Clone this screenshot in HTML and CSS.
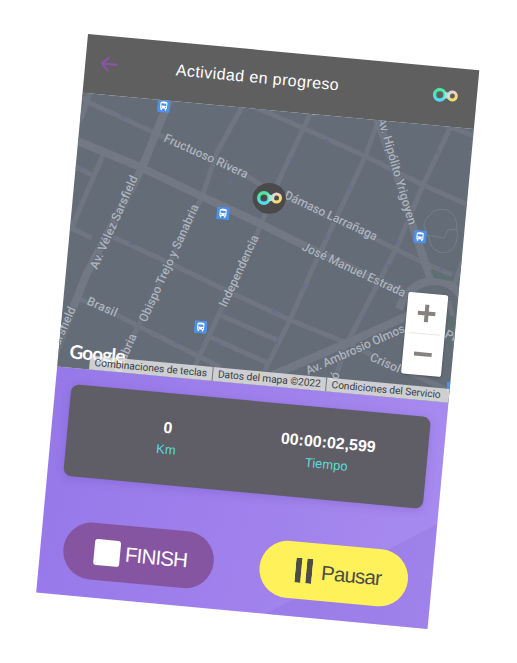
FILE: index.html
```
<!DOCTYPE html>
<html lang="es">
<head>
<meta charset="utf-8">
<title>Actividad en progreso</title>
<link rel="stylesheet" href="styles.css">
</head>
<body>
<svg class="defs" width="0" height="0" aria-hidden="true">
  <defs>
    <linearGradient id="mint" x1="0.3" y1="0" x2="0.5" y2="1">
      <stop offset="0" stop-color="#4be69a"/><stop offset="1" stop-color="#4fdcf0"/>
    </linearGradient>
    <linearGradient id="sun" x1="0" y1="0" x2="0.4" y2="1">
      <stop offset="0.2" stop-color="#f0cfd2"/><stop offset="1" stop-color="#fbdc62"/>
    </linearGradient>
    <symbol id="loop" viewBox="-13 -8 26 16">
      <circle cx="-5.6" cy="0" r="5.2" fill="none" stroke="url(#mint)" stroke-width="3.4"/>
      <circle cx="7" cy="0" r="4" fill="none" stroke="url(#sun)" stroke-width="3"/>
      <path d="M-3 -5Q1.200 -1.200 5 -4.200L3.800 0L5 4.200Q1.200 1.200 -3 5Q0 2.600 -.6 0Q0 -2.600 -3 -5Z" fill="#a9e3d2"/>
      <path d="M1.500 1L5.400 -4L4 3.200Z" fill="#dcdcd4"/>
    </symbol>
    <symbol id="bus" viewBox="0 0 13 13">
      <rect width="13" height="13" rx="1.5" fill="#4c90ea"/>
      <path d="M3 3.2Q3 2 6.5 2T10 3.2V9.2H9.3V10.8H8V9.2H5V10.8H3.7V9.2H3Z" fill="#fff"/>
      <path d="M4 4H9V6.3H4Z" fill="#4c90ea"/>
      <circle cx="4.5" cy="7.8" r=".6" fill="#4c90ea"/><circle cx="8.5" cy="7.8" r=".6" fill="#4c90ea"/>
    </symbol>
  </defs>
</svg>
<main class="phone">
  <header class="bar">
    <svg class="back" viewBox="0 0 18 16"><path d="M17 8H1.5M8.5 1L1.5 8L8.5 15" fill="none" stroke="#8656a3" stroke-width="2.1"/></svg>
    <h1 class="title">Actividad en progreso</h1>
    <svg class="logo"><use href="#loop"/></svg>
  </header>
  <section class="map">
    <svg class="canvas" viewBox="0 0 393 275">
      <g transform="translate(0 -59) rotate(-5.3) translate(-88 -34)">
        <g class="roads">
          <path d="M76 93L90 103L153 132L250 178L269 190L379 241L420 261L452 275"/>
          <path d="M91 90L80 122M103 155L72 227M70 164L94 176M62 224L92 238"/>
          <path d="M113 237L163 260L240 297L290 320L347 343L407 372L460 395"/>
          <path d="M246 100L217 152L202 197L138 327L115 370"/>
          <path d="M312 110L280 178L260 227L220 312L193 370"/>
          <path d="M380 116L365 157L312 270L290 320L265 370"/>
          <path d="M453 122L423 185L397 247L347 343L333 385"/>
          <path d="M250 105L303 128L367 157L423 185L475 208M450 127L480 138"/>
          <path d="M77 298L117 315L140 327L220 367M220 315L277 340M210 337L270 364"/>
          <path d="M475 225L466 252L454 285M448 300Q460 335 452 390"/>
        </g>
        <g class="roads avenues">
          <path d="M68 137L140 167L203 197L257 222L303 245L410 296"/>
          <path d="M170 98L142 168L87 273L75 303L50 365"/>
          <path d="M376 115L392 160L414 230L431 280"/>
          <path d="M273 375L347 343L403 318L436 302"/>
          <path d="M399 309Q409 282 434 281Q453 281 462 298"/>
        </g>
        <path class="park" d="M430 270L453 278L451 281L434 278ZM449 315L456 318L450 350L446 342Z"/>
        <path class="stadium" d="M429 216Q436 207 447 210Q457 214 457 229Q459 245 450 251Q440 256 432 247Q430 240 425 229Q422 222 429 216ZM426 235L444 238L448 230L457 229"/>
        <path d="M312.500 114L314.500 114.500" stroke="#d5d8de" stroke-width="1.500"/>
        <g class="transit"><path d="M121 116l4 2M231 180l-2 4M325 139l4 2M78 168l4 1M129 243l4 2M292 158l-2 4M351 185l-2 5M327 235l-2 5M305 284l-2 5M439 150l-2 4M399 240l-2 4M389 264l-2 4M365 313l-2 4M272 311l4 2M278 340l-2 4M174 342l4 2M203 345l-1 3M216 342l4 2M439 269l4 1"/></g>
        <g class="names">
          <text transform="translate(163 141) rotate(24.3)" textLength="91">Fructuoso Rivera</text>
          <text transform="translate(283.500 198) rotate(25)" textLength="101">Dámaso Larrañaga</text>
          <text transform="translate(301 249.500) rotate(25)" textLength="113">José Manuel Estrada</text>
          <text transform="translate(377.500 119) rotate(73.600)" textLength="111">Av. Hipólito Yrigoyen</text>
          <text transform="translate(97 270) rotate(-66)" textLength="101">Av. Vélez Sarsfield</text>
          <text transform="translate(146 323) rotate(-65.500)" textLength="128">Obispo Trejo y Sanabria</text>
          <text transform="translate(226 308) rotate(-65)" textLength="78">Independencia</text>
          <text transform="translate(86 304) rotate(24)" textLength="32">Brasil</text>
          <text transform="translate(76 309) rotate(-66)" text-anchor="end">Sarsfield</text>
          <text transform="translate(137 336) rotate(-66)" text-anchor="end">Sanabria</text>
          <text transform="translate(308 375) rotate(-24)" textLength="107">Av. Ambrosio Olmos</text>
          <text transform="translate(369 360) rotate(24)" textLength="32">Crisol</text>
          <text transform="translate(444 337) rotate(25)">Pl</text>
          <text transform="translate(340 374) rotate(-66)" text-anchor="end">ló</text>
        </g>
        <use href="#bus" width="13" height="13" transform="translate(163.7 106) rotate(5.3) translate(-6.5 -6.5)"/>
        <use href="#bus" width="13" height="13" transform="translate(223 213.3) rotate(5.3) translate(-6.5 -6.5)"/>
        <use href="#bus" width="13" height="13" transform="translate(420 236.7) rotate(5.3) translate(-6.5 -6.5)"/>
        <use href="#bus" width="13" height="13" transform="translate(200.7 327) rotate(5.3) translate(-6.5 -6.5)"/>
        <rect x="447" y="382" width="8" height="10" fill="#4c90ea"/>
        <ellipse cx="269.3" cy="198.3" rx="16.6" ry="15.4" fill="#4b494a"/>
        <use href="#loop" x="256" y="190" width="27" height="16"/>
      </g>
      <text class="google" x="11" y="265.500" textLength="56">Google</text>
    </svg>
    <div class="zoom">
      <button class="step"><svg viewBox="0 0 18 18"><path d="M9 0V18M0 9H18"/></svg></button>
      <button class="step"><svg viewBox="0 0 18 18"><path d="M0 9H18"/></svg></button>
    </div>
    <footer class="legal">
      <span>Combinaciones de teclas</span><span>Datos del mapa ©2022</span><span>Condiciones del Servicio</span>
    </footer>
  </section>
  <section class="panel">
    <div class="card">
      <div class="stat"><strong>0</strong><span>Km</span></div>
      <div class="stat"><strong>00:00:02,599</strong><span>Tiempo</span></div>
    </div>
    <div class="actions">
      <button class="pill finish"><i class="square"></i>FINISH</button>
      <button class="pill pause"><i class="bars"></i>Pausar</button>
    </div>
  </section>
</main>
</body>
</html>
```
FILE: styles.css
```
* { box-sizing: border-box; }
body {
  margin: 0;
  height: 663px;
  overflow: hidden;
  background: #fff;
  font-family: "Liberation Sans", Arial, sans-serif;
}
.defs { position: absolute; }
.phone {
  width: 393px;
  height: 561px;
  display: flex;
  flex-direction: column;
  transform-origin: 0 0;
  transform: translate(88px, 34px) rotate(5.3deg);
}
.bar {
  height: 59px;
  display: flex;
  align-items: center;
  padding: 0 18px 4px 15px;
  background: #5f5f60;
}
.back { width: 18px; height: 16px; }
.title {
  margin: 0 auto 0 58px;
  font-size: 16px;
  font-weight: 400;
  letter-spacing: 0.43px;
  color: #fff;
  white-space: nowrap;
}
.logo { width: 27px; height: 16px; }
.map {
  position: relative;
  height: 275px;
  overflow: hidden;
  background: #646c77;
}
.canvas { display: block; width: 393px; height: 275px; }
.roads { fill: none; stroke: #6f7682; stroke-width: 5; stroke-linejoin: round; }
.avenues { stroke: #727984; stroke-width: 8; }
.park { fill: #5d7071; }
.stadium { fill: none; stroke: #757d88; stroke-width: 1; }
.transit { fill: none; stroke: #666d8e; stroke-width: 2; }
.names {
  font-family: Roboto, sans-serif;
  font-size: 12.2px;
  font-weight: 500;
  fill: #adb3bf;
  stroke: #646c77;
  stroke-width: 2px;
  paint-order: stroke;
}
.google {
  font-family: Lato, sans-serif;
  font-size: 19px;
  font-weight: 700;
  fill: #fff;
}
.zoom {
  position: absolute;
  right: 10px;
  bottom: 25.5px;
  width: 40px;
  height: 82px;
  display: flex;
  flex-direction: column;
  background: #fff;
  border-radius: 2px;
  box-shadow: 0 1px 3px rgba(0, 0, 0, .25);
}
.step {
  flex: 1;
  display: grid;
  place-items: center;
  margin: 0 5px;
  padding: 0;
  border: 0;
  background: none;
}
.step + .step { border-top: 1px solid #e6e6e6; }
.step svg { width: 18px; height: 18px; fill: none; stroke: #85827f; stroke-width: 4; }
.legal {
  position: absolute;
  right: 0;
  bottom: 0;
  display: flex;
  width: 361px;
  height: 14px;
  background: rgba(240, 240, 240, .75);
  font: 10.2px/14px Roboto, sans-serif;
  letter-spacing: -.06px;
  color: #3c3c3e;
  white-space: nowrap;
}
.legal span { padding: 0 5px; }
.legal span + span { border-left: 1px solid #77777b; }
.panel {
  flex: 1;
  padding: 15.5px 16px 0;
  background:
    linear-gradient(147deg, transparent 78%, rgba(135, 105, 220, .28) 78.2%),
    linear-gradient(98deg, #9678e9, #9f80ec 50%, #a88bef);
}
.card {
  height: 92px;
  display: flex;
  justify-content: center;
  align-items: center;
  border-radius: 8px;
  background: #5f5d66;
  box-shadow: 0 2px 8px rgba(90, 65, 160, .25);
}
.stat {
  width: 161px;
  display: flex;
  flex-direction: column;
  align-items: center;
  gap: 4px;
  line-height: 18px;
}
.stat strong { font-size: 16px; color: #fff; }
.stat span { font-size: 13px; color: #58dcd6; }
.actions {
  display: flex;
  justify-content: space-between;
  margin-top: 44.5px;
  padding: 0 8px 0 7px;
}
.pill {
  height: 57px;
  display: flex;
  align-items: center;
  border: 0;
  border-radius: 29px;
  font: 20.5px "Liberation Sans", Arial, sans-serif;
  letter-spacing: -.8px;
}
.finish { width: 151px; padding: 0 0 0 31px; gap: 5px; background: #8655a1; color: #fff; }
.pause { width: 149px; padding: 0 0 0 36px; gap: 9px; background: #fff159; color: #4c4c49; }
.square { width: 26px; height: 26px; border-radius: 3px; background: #fff; }
.bars { width: 17px; height: 25px; border: solid #4c4c49; border-width: 0 6px; border-radius: 1px; }
```
